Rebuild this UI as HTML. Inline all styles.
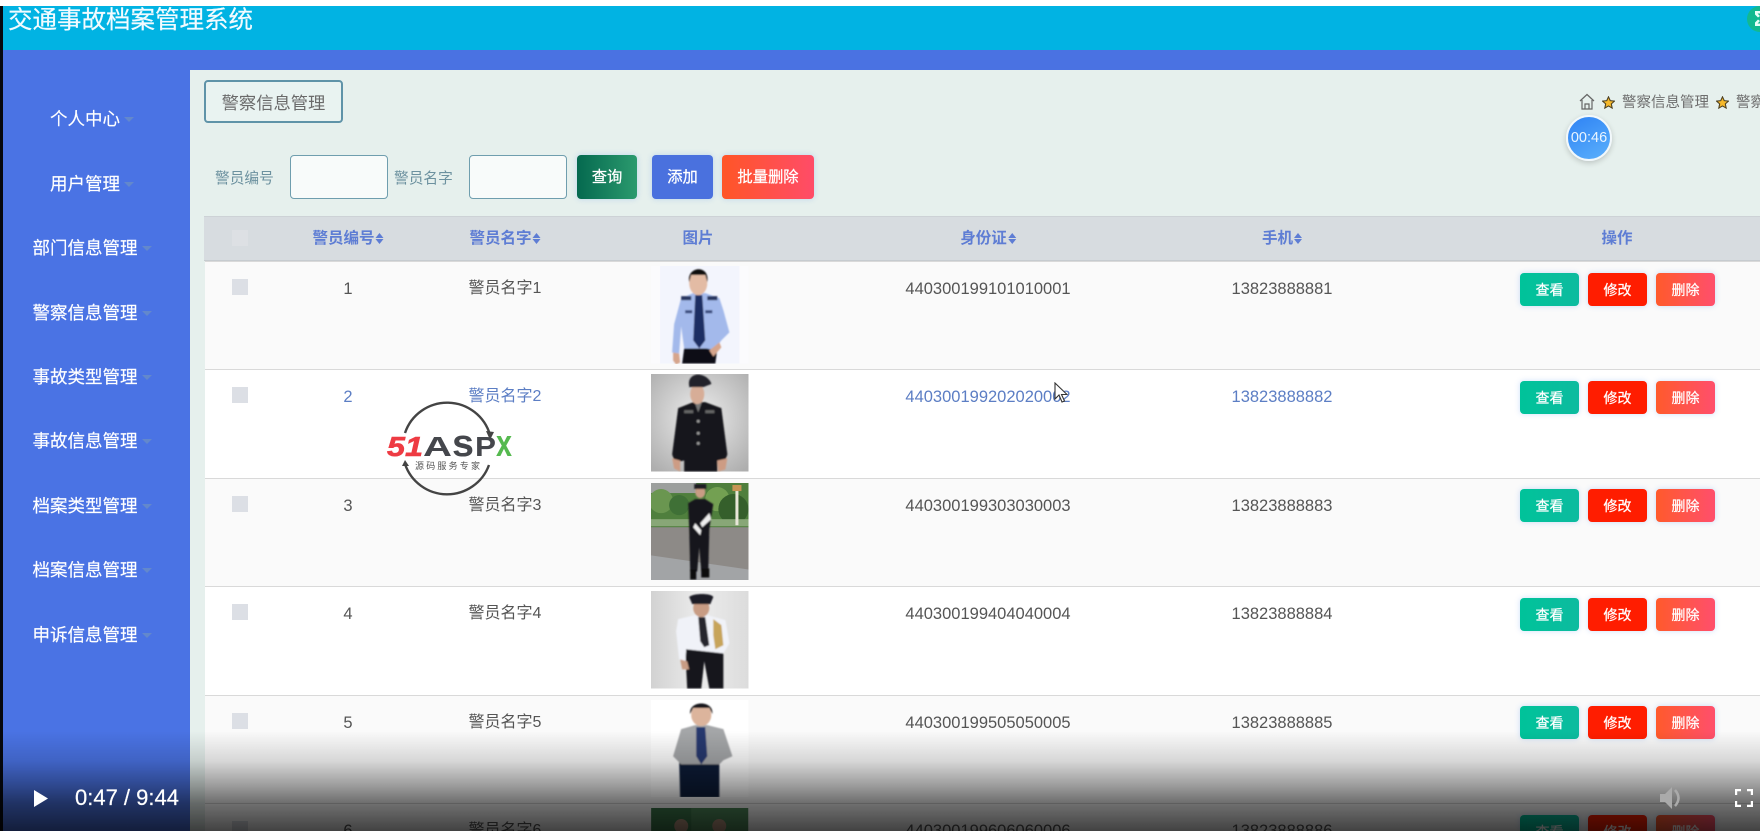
<!DOCTYPE html>
<html lang="zh"><head><meta charset="utf-8"><title>交通事故档案管理系统</title>
<style>
*{box-sizing:border-box;margin:0;padding:0}
html,body{width:1760px;height:831px;overflow:hidden;background:#fff}
body{font-family:"Liberation Sans","Noto Sans CJK SC",sans-serif;position:relative}
.a{position:absolute}
#app{position:absolute;left:0;top:0;width:1760px;height:831px;overflow:hidden;filter:blur(.35px)}
.nav{position:absolute;left:-1.5px;width:187px;height:24px;line-height:24px;color:#fff;font-size:17.5px;text-align:center;white-space:nowrap;-webkit-text-stroke:.15px #fff}
.nav i{display:inline-block;margin-left:4px;vertical-align:3px;border:5px solid transparent;border-top-color:#6388cc;border-bottom:0}
.btn{position:absolute;color:#fff;text-align:center;border-radius:4px;font-size:14px;-webkit-text-stroke:.25px #fff;box-shadow:0 0 6px rgba(90,150,240,.3)}
.tb{top:155px;height:44px;line-height:46px;font-size:15.3px}
.in{position:absolute;top:155px;width:98px;height:44px;border:1.5px solid #6f9eae;border-radius:4px;background:#f8fbfa}
.lb{position:absolute;top:169px;font-size:14.7px;line-height:20px;color:#6c919f;white-space:nowrap}
.th{position:absolute;top:227px;height:24px;line-height:24px;color:#5e7dd4;font-size:15.5px;font-weight:bold;white-space:nowrap;transform:translateX(-50%)}
.th s{display:inline-block;width:8px;height:11px;margin-left:1px;vertical-align:-1px;position:relative}
.th s:before,.th s:after{content:"";position:absolute;left:0;border:4px solid transparent}
.th s:before{top:0;border-bottom:5px solid #5e7dd4;border-top:0}
.th s:after{bottom:0;border-top:5px solid #5e7dd4;border-bottom:0}
.row{position:absolute;left:205px;width:1555px;height:108.4px;border-top:1.5px solid #d9d9d9;color:#555;font-size:16px}
.row.o{background:#fafafa}.row.e{background:#fff}
.row.h{color:#5c7ec4}
.cb{position:absolute;left:27px;top:17px;width:16px;height:16px;background:#dcdfe5}
.c{position:absolute;top:15px;height:24px;line-height:24px;white-space:nowrap;transform:translateX(-50%)}
.num{font-size:16.5px}
.pic{position:absolute;left:446px;top:4px;width:97.5px;height:97.5px;overflow:hidden}
.pic svg{display:block}
.rb{top:10.5px;height:33px;line-height:35px;width:59px}
.v{left:1315px;background:linear-gradient(90deg,#00c39a,#0dbb9f)}
.x{left:1383px;background:#ff1d00}
.d{left:1451px;background:linear-gradient(90deg,#ff5a2c,#ff4f6c)}
.last{height:26.5px;overflow:hidden}
.last .cb{height:9.5px}
.last .c{height:11.5px;overflow:hidden}
.last .pic{height:22.5px}
.last .rb{height:16px;border-radius:4px 4px 0 0}
#ov{position:absolute;left:0;top:731px;width:1760px;height:100px;background:linear-gradient(rgba(0,0,0,0) 0,rgba(0,0,0,.14) 30%,rgba(0,0,0,.38) 55%,rgba(0,0,0,.56) 72%,rgba(0,0,0,.74) 100%)}
</style></head><body>
<div id="app">
<div class="a" style="left:0;top:6px;width:3px;height:825px;background:#06080e"></div>
<div class="a" style="left:3px;top:6px;width:1757px;height:44px;background:#01b3e3;overflow:hidden">
  <div class="a" style="left:5px;top:-3px;font-size:24.5px;line-height:36px;color:#f2fbff;white-space:nowrap;-webkit-text-stroke:.2px #f2fbff">交通事故档案管理系统</div>
  <div class="a" style="left:1744px;top:0;width:13px;height:26px;border-radius:13px 0 0 13px;background:#12b990"></div>
  <svg class="a" style="left:1752px;top:5px" width="5" height="15" viewBox="0 0 5 15"><path d="M0 0H5V2.500H2.500L5 5 3 6.500 0 3.500ZM0 15H5V12.500H2.500L5 10 3 8.500 0 11.500Z" fill="#eafff8"/></svg>
</div>
<div class="a" style="left:3px;top:50px;width:1757px;height:20px;background:#4a72e2"></div>
<div class="a" style="left:3px;top:70px;width:187px;height:761px;background:#4a73e4"></div>
<div class="a" style="left:190px;top:70px;width:1570px;height:761px;background:#e6f0ed"></div>

<div class="nav" style="top:107px">个人中心<i></i></div>
<div class="nav" style="top:172px">用户管理<i></i></div>
<div class="nav" style="top:236px">部门信息管理<i></i></div>
<div class="nav" style="top:301px">警察信息管理<i></i></div>
<div class="nav" style="top:365px">事故类型管理<i></i></div>
<div class="nav" style="top:429px">事故信息管理<i></i></div>
<div class="nav" style="top:494px">档案类型管理<i></i></div>
<div class="nav" style="top:558px">档案信息管理<i></i></div>
<div class="nav" style="top:623px">申诉信息管理<i></i></div>

<div class="a" style="left:204px;top:80px;width:139px;height:43px;border:2px solid #5f93a8;border-radius:4px;background:#e9f3f1;color:#6a6a6a;font-size:17.3px;line-height:42px;text-align:center">警察信息管理</div>

<svg class="a" style="left:1579px;top:93px" width="16" height="17" viewBox="0 0 16 17"><path d="M1 8 8 1.500 15 8M3 7v9h10V7M6 16v-5h4v5" fill="none" stroke="#666" stroke-width="1.200"/></svg>
<svg class="a" style="left:1602px;top:96px" width="13" height="13" viewBox="0 0 24 24"><path d="M12 1.500 15.200 8.600 23 9.400 17.200 14.600 18.800 22.300 12 18.400 5.200 22.300 6.800 14.600 1 9.400 8.800 8.600Z" fill="#f6b92b" stroke="#4d4020" stroke-width="2"/></svg>
<div class="a" style="left:1622px;top:93px;width:90px;font-size:14.500px;line-height:20px;color:#6d6d6d;white-space:nowrap">警察信息管理</div>
<svg class="a" style="left:1716px;top:96px" width="13" height="13" viewBox="0 0 24 24"><path d="M12 1.500 15.200 8.600 23 9.400 17.200 14.600 18.800 22.300 12 18.400 5.200 22.300 6.800 14.600 1 9.400 8.800 8.600Z" fill="#f6b92b" stroke="#4d4020" stroke-width="2"/></svg>
<div class="a" style="left:1736px;top:93px;width:24px;overflow:hidden;font-size:14.500px;line-height:20px;color:#6d6d6d;white-space:nowrap">警察信息管理</div>

<div class="lb" style="left:215px">警员编号</div>
<div class="in" style="left:290px"></div>
<div class="lb" style="left:394px">警员名字</div>
<div class="in" style="left:469px"></div>
<div class="btn tb" style="left:577px;width:60px;background:linear-gradient(90deg,#05694f,#2b9a6e)">查询</div>
<div class="btn tb" style="left:652px;width:61px;background:#4a71de">添加</div>
<div class="btn tb" style="left:722px;width:92px;background:linear-gradient(90deg,#ff5527,#ff4c68)">批量删除</div>

<div class="a" style="left:204px;top:216px;width:1556px;height:45px;background:#d7dce0;border-top:1px solid #cdd2d6;border-bottom:1px solid #c6cbcf"></div>
<div class="a" style="left:232px;top:230px;width:16px;height:16px;background:#dde0e4"></div>
<div class="th" style="left:348px">警员编号<s></s></div>
<div class="th" style="left:505px">警员名字<s></s></div>
<div class="th" style="left:698px">图片</div>
<div class="th" style="left:988px">身份证<s></s></div>
<div class="th" style="left:1282px">手机<s></s></div>
<div class="th" style="left:1617px">操作</div>

<div class="row o" style="top:261px"><div class="cb"></div><div class="c num" style="left:143px">1</div><div class="c" style="left:300px">警员名字1</div>
<div class="pic"><svg width="97.5" height="97.5" viewBox="0 0 97 97"><defs><filter id="b"><feGaussianBlur stdDeviation=".7"/></filter></defs><rect width="97" height="97" fill="#fbfbfd"/><rect x="9" width="79" height="97" fill="#f3f5fd"/><g filter="url(#b)"><path d="M33 82H66L64 97H31Z" fill="#0d0d14"/><path d="M30 32 42 27H54L68 32 72 44 78 66 70 74 63 84 55 82H33L30 60 28 87 21 86 23 58Z" fill="#a3b9eb"/><path d="M44 29H51L54 74 48 82 42 74Z" fill="#1d2e63"/><path d="M22 86 28 87 29 96 25 98 22 94Z" fill="#d6a58c"/><path d="M58 84 68 76 70 81 62 90Z" fill="#d6a58c"/><ellipse cx="47" cy="17" rx="9" ry="12" fill="#e3bba4"/><path d="M38 16C35 0 59 -2 56 16L54 9H40Z" fill="#0c0c0f"/><rect x="30" y="30" width="10" height="4" fill="#28365f"/><rect x="56" y="30" width="10" height="4" fill="#28365f"/><rect x="34" y="44" width="7" height="3" fill="#3b4b7d"/><rect x="54" y="44" width="7" height="3" fill="#3b4b7d"/></g></svg></div>
<div class="c num" style="left:783px">440300199101010001</div><div class="c num" style="left:1077px">13823888881</div>
<div class="btn rb v">查看</div><div class="btn rb x">修改</div><div class="btn rb d">删除</div></div>

<div class="row e h" style="top:369.4px"><div class="cb"></div><div class="c num" style="left:143px">2</div><div class="c" style="left:300px">警员名字2</div>
<div class="pic"><svg width="97.5" height="97.5" viewBox="0 0 97 97"><defs><radialGradient id="g2" cx=".5" cy=".45" r=".7"><stop offset="0" stop-color="#eee"/><stop offset="1" stop-color="#aeaeae"/></radialGradient></defs><rect width="97" height="97" fill="url(#g2)"/><g filter="url(#b)"><path d="M27 34 42 28H54L70 34 76 80 73 88 66 86V97H33V86L24 88 21 80Z" fill="#16181e"/><rect x="33" y="36" width="9" height="3" fill="#666"/><rect x="54" y="36" width="9" height="3" fill="#666"/><circle cx="47" cy="47" r="1.500" fill="#999"/><circle cx="47" cy="59" r="1.500" fill="#999"/><circle cx="47" cy="69" r="1.500" fill="#999"/><path d="M43 27H51L47 38Z" fill="#777"/><path d="M21 84 29 86 29 97 23 94Z" fill="#cd9c84"/><path d="M66 86 76 84 74 95 67 97Z" fill="#cd9c84"/><ellipse cx="46" cy="20" rx="7" ry="10" fill="#d7ad97"/><path d="M38 12C36 3 44 -1 50 1 55 2 60 7 60 10L52 13H38Z" fill="#22242b"/></g></svg></div>
<div class="c num" style="left:783px">440300199202020002</div><div class="c num" style="left:1077px">13823888882</div>
<div class="btn rb v">查看</div><div class="btn rb x">修改</div><div class="btn rb d">删除</div></div>

<div class="row o" style="top:477.8px"><div class="cb"></div><div class="c num" style="left:143px">3</div><div class="c" style="left:300px">警员名字3</div>
<div class="pic"><svg width="97.5" height="97.5" viewBox="0 0 97 97"><rect width="97" height="48" fill="#4f7f3d"/><rect width="45" height="10" fill="#9c9f9d"/><circle cx="10" cy="18" r="12" fill="#6a9650"/><circle cx="28" cy="22" r="10" fill="#3f7036"/><circle cx="66" cy="16" r="12" fill="#73a052"/><circle cx="82" cy="26" r="15" fill="#355f2b"/><rect y="36" width="97" height="7" fill="#88a777"/><rect x="84" y="4" width="3" height="38" fill="#e8e6d8"/><rect x="81" y="2" width="9" height="6" fill="#c79555"/><rect y="44" width="97" height="53" fill="#8d8a87"/><path d="M0 72 97 86V97H0Z" fill="#a2a4a6"/><g filter="url(#b)"><path d="M37 20 44 16H54L62 21 58 46 57 88H50L48 64 46 88H39L38 46Z" fill="#16161a"/><path d="M44 40 50 47 49 52 42 44ZM58 30 49 40 51 44 60 36Z" fill="#eee"/><ellipse cx="49" cy="9" rx="5" ry="6" fill="#c89c84"/><rect x="43" y="1" width="12" height="5" fill="#1b1b22"/><rect x="39" y="86" width="6" height="10" fill="#0e0e10"/><rect x="50" y="85" width="8" height="9" fill="#0e0e10"/></g></svg></div>
<div class="c num" style="left:783px">440300199303030003</div><div class="c num" style="left:1077px">13823888883</div>
<div class="btn rb v">查看</div><div class="btn rb x">修改</div><div class="btn rb d">删除</div></div>

<div class="row e" style="top:586.2px"><div class="cb"></div><div class="c num" style="left:143px">4</div><div class="c" style="left:300px">警员名字4</div>
<div class="pic"><svg width="97.5" height="97.5" viewBox="0 0 97 97"><defs><linearGradient id="g4" x1="0" x2="1"><stop offset="0" stop-color="#d2d2d2"/><stop offset=".5" stop-color="#ececec"/><stop offset="1" stop-color="#dcdcdc"/></linearGradient></defs><rect width="97" height="97" fill="url(#g4)"/><g filter="url(#b)"><path d="M34 56H72L72 97H58L53 70 50 97H36Z" fill="#12121a"/><path d="M27 28 44 24H56L74 29 78 52 72 62 35 58 34 72 28 68 25 40Z" fill="#f0f2f8"/><path d="M47 26H54L58 54 53 56 49 50Z" fill="#26262e"/><path d="M62 28 70 34 72 54 64 58 62 44Z" fill="#c7a45a"/><path d="M29 68 36 70 38 78 31 78Z" fill="#c89c84"/><ellipse cx="50" cy="17" rx="8" ry="9" fill="#c89c84"/><path d="M38 6C42 2 60 2 62 6L59 13H41Z" fill="#1e1e26"/></g></svg></div>
<div class="c num" style="left:783px">440300199404040004</div><div class="c num" style="left:1077px">13823888884</div>
<div class="btn rb v">查看</div><div class="btn rb x">修改</div><div class="btn rb d">删除</div></div>

<div class="row o" style="top:694.6px"><div class="cb"></div><div class="c num" style="left:143px">5</div><div class="c" style="left:300px">警员名字5</div>
<div class="pic"><svg width="97.5" height="97.5" viewBox="0 0 97 97"><rect width="97" height="97" fill="#fff"/><g filter="url(#b)"><path d="M28 60H68V97H29Z" fill="#0f1e38"/><path d="M30 29 44 25H56L72 29 81 56 72 60 68 64H30L26 60 22 56Z" fill="#a4a6a8"/><path d="M45 27H54L56 56 50 64 45 56Z" fill="#26396e"/><ellipse cx="50" cy="15" rx="10" ry="11" fill="#dcb49c"/><path d="M39 14C37 0 63 0 61 14L58 8H42Z" fill="#14141a"/></g></svg></div>
<div class="c num" style="left:783px">440300199505050005</div><div class="c num" style="left:1077px">13823888885</div>
<div class="btn rb v">查看</div><div class="btn rb x">修改</div><div class="btn rb d">删除</div></div>

<div class="row e last" style="top:803px;height:28px"><div class="cb"></div><div class="c num" style="left:143px">6</div><div class="c" style="left:300px">警员名字6</div>
<div class="pic"><svg width="97.5" height="22.5" viewBox="0 0 97 22.500"><rect width="97" height="23" fill="#4e8a5a"/><path d="M0 0H40V23H0Z" fill="#3d7a4c"/><circle cx="30" cy="18" r="7" fill="#b4927c"/><circle cx="68" cy="18" r="7" fill="#b4927c"/></svg></div>
<div class="c num" style="left:783px">440300199606060006</div><div class="c num" style="left:1077px">13823888886</div>
<div class="btn rb v">查看</div><div class="btn rb x">修改</div><div class="btn rb d">删除</div></div>

<div class="a" style="left:1566px;top:115px;width:46px;height:46px;border-radius:50%;border:2px solid #f2f8fb;background:linear-gradient(150deg,#2f83f4,#5bb0fc);box-shadow:0 2px 6px rgba(0,0,0,.18);color:#eaf5ff;font-size:14.500px;line-height:42px;text-align:center">00:46</div>

<svg class="a" style="left:380px;top:398px" width="140" height="100" viewBox="380 398 140 100">
<path d="M405 433A44.500 44.500 0 0 1 490 435M405 464A44.500 44.500 0 0 0 489 465" fill="none" stroke="#444" stroke-width="2.400"/>
<path d="M486 431 494 432 490 440Z" fill="#444"/>
<path d="M402 466 409 466 405 460Z" fill="#444"/>
<text x="387" y="456" font-family="Liberation Sans" font-size="28" font-weight="bold" font-style="italic" fill="#ee3b43" stroke="#ee3b43" stroke-width=".6" textLength="36" lengthAdjust="spacingAndGlyphs">51</text>
<g font-family="Liberation Sans" font-weight="bold" fill="#45474c">
<text x="423" y="456" font-size="28" textLength="29" lengthAdjust="spacingAndGlyphs">A</text>
<text x="452" y="456" font-size="38" textLength="22" lengthAdjust="spacingAndGlyphs">s</text>
<text x="475" y="456" font-size="28" textLength="21" lengthAdjust="spacingAndGlyphs">P</text>
<text x="496" y="456" font-size="38" textLength="16" lengthAdjust="spacingAndGlyphs" fill="#55b94f">x</text>
</g>
<text x="415" y="469" font-family="Liberation Sans,Noto Sans CJK SC,sans-serif" font-size="9" fill="#555" letter-spacing="2.200">源码服务专家</text>
</svg>

<svg class="a" style="left:1054px;top:382px" width="14" height="21" viewBox="0 0 14 21"><path d="M1 1V17L5 13 8 20 10.500 19 7.500 12.500H13Z" fill="#fff" stroke="#333" stroke-width="1.100"/></svg>

<div id="ov"></div>
<svg class="a" style="left:33px;top:789px" width="16" height="19" viewBox="0 0 16 19"><path d="M1 1 15 9.500 1 18Z" fill="#fff"/></svg>
<div class="a" style="left:75px;top:785px;font-size:22px;line-height:26px;color:#fff;white-space:nowrap;-webkit-text-stroke:.2px #fff">0:47 / 9:44</div>
<svg class="a" style="left:1660px;top:786px" width="24" height="24" viewBox="0 0 24 24"><path d="M0 8H5L12 1V23L5 16H0Z" fill="#aaa"/><path d="M15 4Q22 12 15 20" fill="none" stroke="#aaa" stroke-width="2.500"/></svg>
<svg class="a" style="left:1735px;top:789px" width="18" height="18" viewBox="0 0 18 18"><path d="M1 6V1H6M12 1H17V6M17 12V17H12M6 17H1V12" fill="none" stroke="#fff" stroke-width="2.400"/></svg>
</div>
</body></html>
